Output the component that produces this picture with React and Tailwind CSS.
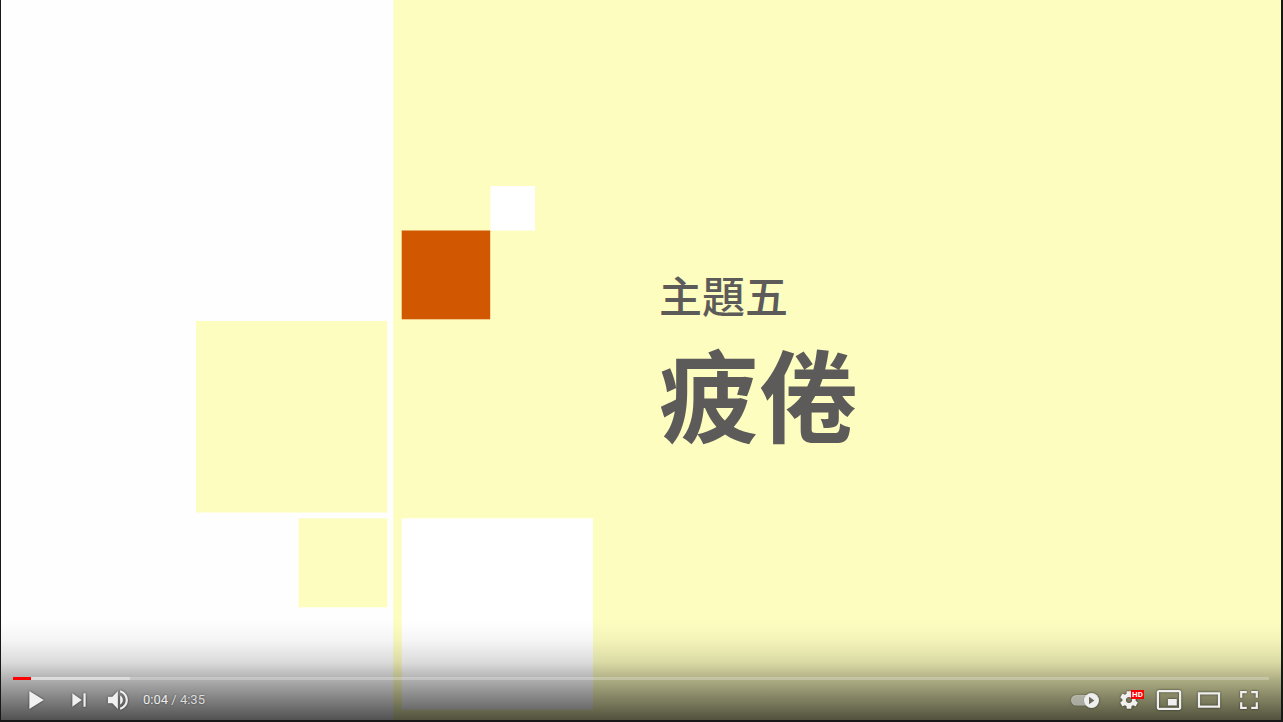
import { useState } from 'react';

const duration = 275;
const buffered = 25.6;

const icons = {
  play: 'M12,26 18.5,22 18.5,14 12,10z M18.5,22 25,18 25,18 18.5,14z',
  pause: 'M12,26 16,26 16,10 12,10z M21,26 25,26 25,10 21,10z',
  next: 'M12,24 20.5,18 12,12V24z M22,12v12h2V12h-2z',
  volume:
    'M8,21 L12,21 L17,26 L17,10 L12,15 L8,15z M19,14 L19,22 C20.48,21.32 21.5,19.77 21.5,18 C21.5,16.26 20.48,14.74 19,14z M19,11.29 C21.89,12.15 24,14.83 24,18 C24,21.17 21.89,23.85 19,24.71 L19,26.77 C23.01,25.86 26,22.28 26,18 C26,13.72 23.01,10.14 19,9.23z',
  settings:
    'm23.94,18.78c.03,-.25.05,-.51.05,-.78 0,-.27-.02,-.52-.05,-.78l1.68,-1.32c.15,-.12.19,-.33.09,-.51l-1.6,-2.76c-.09,-.17-.31,-.24-.48,-.17l-1.99,.8c-.41,-.32-.86,-.58-1.35,-.78l-.3,-2.12c-.02,-.19-.19,-.33-.39,-.33l-3.2,0c-.2,0-.36,.14-.39,.33l-.3,2.12c-.48,.2-.93,.47-1.35,.78l-1.99,-.8c-.18,-.07-.39,0-.48,.17l-1.6,2.76c-.1,.17-.05,.39.09,.51l1.68,1.32c-.03,.25-.05,.52-.05,.78 0,.26.02,.52.05,.78l-1.68,1.32c-.15,.12-.19,.33-.09,.51l1.6,2.76c.09,.17.31,.24.48,.17l1.99,-.8c.41,.32.86,.58 1.35,.78l.3,2.12c.02,.19.19,.33.39,.33l3.2,0c.2,0 .36,-.14.39,-.33l.3,-2.12c.48,-.2.93,-.47 1.35,-.78l1.99,.8c.18,.07.39,0 .48,-.17l1.6,-2.76c.09,-.17.05,-.39-.09,-.51l-1.68,-1.32z m-5.94,2.01c-1.54,0-2.8,-1.25-2.8,-2.8 0,-1.54 1.25,-2.8 2.8,-2.8 1.54,0 2.8,1.25 2.8,2.8 0,1.54-1.25,2.8-2.8,2.8z',
  miniplayer:
    'M25,17H17V23H25z M29,25V10.98C29,9.88 28.1,9 27,9H9C7.9,9 7,9.88 7,10.98V25C7,26.1 7.9,27 9,27H27C28.1,27 29,26.1 29,25z M27,25.02H9V10.97H27z',
  theater: 'm28,11 0,14 -20,0 0,-14z m-18,2 16,0 0,10 -16,0z',
  fullscreen:
    'M10,16h2v-4h4v-2h-6z M20,10v2h4v4h2v-6z M24,24h-4v2h6v-6h-2z M12,20h-2v6h6v-2h-4z',
};

const formatTime = (seconds) =>
  `${Math.floor(seconds / 60)}:${String(Math.floor(seconds % 60)).padStart(2, '0')}`;

function ControlButton({ icon, label, onClick, children }) {
  return (
    <button
      type="button"
      aria-label={label}
      onClick={onClick}
      className="relative h-10 w-10 shrink-0 text-[#f0f0f0] hover:text-white"
    >
      <svg viewBox="0 0 36 36" className="h-full w-full drop-shadow-[0_0_1px_rgba(0,0,0,0.6)]" aria-hidden="true">
        <path d={icons[icon]} fill="currentColor" fillRule="evenodd" />
      </svg>
      {children}
    </button>
  );
}

function AutoplaySwitch() {
  const [on, setOn] = useState(true);

  return (
    <button
      type="button"
      role="switch"
      aria-checked={on}
      aria-label="Autoplay"
      onClick={() => setOn(!on)}
      className="h-10 w-11 shrink-0"
    >
      <svg viewBox="0 0 44 40" className="h-full w-full drop-shadow-[0_0_1px_rgba(0,0,0,0.6)]" aria-hidden="true">
        <rect x="6" y="15" width="26" height="10.5" rx="5.25" fill="#fff" fillOpacity="0.5" />
        <g transform={on ? undefined : 'translate(-14 0)'}>
          <circle cx="26.5" cy="20.5" r="7.5" fill="#eee" />
          <path d="M24 16.8v7.4l5.4-3.7z" fill="#6b6a58" />
        </g>
      </svg>
    </button>
  );
}

function SlideArtwork() {
  return (
    <svg
      viewBox="0 0 1280 720"
      preserveAspectRatio="none"
      className="absolute inset-0 h-full w-full"
      aria-hidden="true"
    >
      <rect width="1280" height="720" fill="#fefefe" />
      <g fill="#fdfdc0">
        <rect x="392.3" width="887.7" height="720" />
        <rect x="195" y="321" width="191.3" height="191.5" />
        <rect x="297.5" y="518.3" width="89" height="89" />
      </g>
      <g fill="#fff">
        <rect x="489.5" y="186" width="44.5" height="44.5" />
        <rect x="400.7" y="518.3" width="191.3" height="191.3" />
      </g>
      <rect x="400.7" y="230.5" width="88.5" height="88.8" fill="#d15700" />
    </svg>
  );
}

export default function App() {
  const [time, setTime] = useState(4);
  const [playing, setPlaying] = useState(false);

  const played = (time / duration) * 100;
  const loaded = (buffered / duration) * 100;

  return (
    <main className="bg-[#181818] pr-0.5 pb-0.5 pl-px">
      <section
        aria-label="Video player"
        className="relative flex aspect-video w-full flex-col justify-center overflow-hidden"
      >
        <SlideArtwork />

        <div
          lang="zh-Hant"
          className="relative pl-[51.4%] font-['Noto_Sans_CJK_TC',sans-serif] text-[#5c5b5a]"
        >
          <p className="text-[43px] leading-16 font-medium">主題五</p>
          <h1 className="text-[100px] leading-[132px] font-bold">疲倦</h1>
        </div>

        <div className="absolute inset-x-0 bottom-0 bg-[linear-gradient(to_bottom,transparent,rgb(0_0_0/0.04)_20%,rgb(0_0_0/0.14)_42%,rgb(0_0_0/0.32)_60%,rgb(0_0_0/0.68))] px-3 pt-14">
          <input
            type="range"
            aria-label="Seek"
            min="0"
            max={duration}
            value={time}
            onChange={(e) => setTime(Number(e.target.value))}
            className="block h-[3px] w-full cursor-pointer appearance-none [&::-webkit-slider-thumb]:h-0 [&::-webkit-slider-thumb]:w-0 [&::-webkit-slider-thumb]:appearance-none"
            style={{
              background: `linear-gradient(to right, #f00 ${played}%, rgba(255,255,255,0.55) ${played}% ${loaded}%, rgba(255,255,255,0.25) ${loaded}%)`,
            }}
          />
          <div className="flex h-10 items-center justify-between">
            <div className="flex items-center pl-[3px]">
              <ControlButton
                icon={playing ? 'pause' : 'play'}
                label={playing ? 'Pause' : 'Play'}
                onClick={() => setPlaying(!playing)}
              />
              <div className="flex pl-[3px]">
                <ControlButton icon="next" label="Next" />
                <ControlButton icon="volume" label="Mute" />
              </div>
              <p className="pl-1 font-[Roboto,sans-serif] text-[13px] text-[#dddddd] [text-shadow:0_0_2px_rgba(0,0,0,0.5)]">
                <span className="text-[#eeeeee]">{formatTime(time)}</span> / {formatTime(duration)}
              </p>
            </div>
            <div className="flex items-center">
              <AutoplaySwitch />
              <ControlButton icon="settings" label="Settings">
                <span className="absolute top-2.5 right-[5px] flex h-[9px] w-[13px] items-center justify-center bg-[#ff0000] font-[Roboto,sans-serif] text-[8px] leading-none font-bold text-white">
                  HD
                </span>
              </ControlButton>
              <ControlButton icon="miniplayer" label="Miniplayer" />
              <ControlButton icon="theater" label="Theater mode" />
              <ControlButton icon="fullscreen" label="Full screen" />
            </div>
          </div>
        </div>
      </section>
    </main>
  );
}
